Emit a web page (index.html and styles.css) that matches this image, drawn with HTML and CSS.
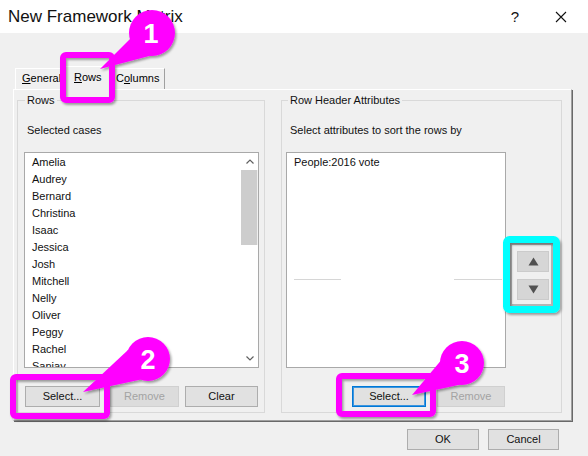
FILE: index.html
```html
<!DOCTYPE html>
<html lang="en">
<head>
<meta charset="utf-8">
<title>New Framework Matrix</title>
<link rel="stylesheet" href="styles.css">
</head>
<body>
<div class="dialog">
  <div class="titlebar">
    <span class="title">New Framework Matrix</span>
    <span class="tb-btn tb-help">?</span>
    <span class="tb-btn tb-close">
      <svg width="12" height="12" viewBox="0 0 12 12"><path d="M1 1L11 11M11 1L1 11" stroke="#111" stroke-width="1.1" fill="none"/></svg>
    </span>
  </div>

  <div class="tabs">
    <div class="tab tab-general"><u>G</u>eneral</div>
    <div class="tab tab-rows"><u>R</u>ows</div>
    <div class="tab tab-columns">C<u>o</u>lumns</div>
  </div>

  <div class="panel">
    <fieldset class="group group-rows">
      <legend>Rows</legend>
      <div class="group-body">
        <div class="caption">Selected cases</div>
        <div class="listbox listbox-rows">
          <ul class="items">
            <li>Amelia</li>
            <li>Audrey</li>
            <li>Bernard</li>
            <li>Christina</li>
            <li>Isaac</li>
            <li>Jessica</li>
            <li>Josh</li>
            <li>Mitchell</li>
            <li>Nelly</li>
            <li>Oliver</li>
            <li>Peggy</li>
            <li>Rachel</li>
            <li>Sanjay</li>
          </ul>
          <div class="scrollbar">
            <div class="sb-arrow"><svg width="8" height="5" viewBox="0 0 8 5"><path d="M0.5 4.5L4 1L7.5 4.5" stroke="#606060" stroke-width="1.2" fill="none"/></svg></div>
            <div class="sb-thumb"></div>
            <div class="sb-track"></div>
            <div class="sb-arrow"><svg width="8" height="5" viewBox="0 0 8 5"><path d="M0.5 0.5L4 4L7.5 0.5" stroke="#606060" stroke-width="1.2" fill="none"/></svg></div>
          </div>
        </div>
        <div class="btnrow">
          <button class="btn btn-select-l">Select...</button>
          <button class="btn btn-remove-l" disabled>Remove</button>
          <button class="btn btn-clear">Clear</button>
        </div>
      </div>
    </fieldset>

    <fieldset class="group group-attrs">
      <legend>Row Header Attributes</legend>
      <div class="group-body">
        <div class="caption">Select attributes to sort the rows by</div>
        <div class="attr-main">
          <div class="listbox listbox-attrs">
            <ul class="items"><li>People:2016 vote</li></ul>
          </div>
          <div class="movebtns">
            <button class="mbtn"><svg width="11" height="9" viewBox="0 0 11 9"><path d="M5.5 0.5L10.5 8.5H0.5Z" fill="#505050"/></svg></button>
            <button class="mbtn"><svg width="11" height="9" viewBox="0 0 11 9"><path d="M0.5 0.5H10.5L5.5 8.5Z" fill="#505050"/></svg></button>
          </div>
        </div>
        <div class="btnrow">
          <button class="btn btn-focus btn-select-r">Select...</button>
          <button class="btn btn-remove-r" disabled>Remove</button>
        </div>
      </div>
    </fieldset>
  </div>

  <div class="footer">
    <button class="btn btn-ok">OK</button>
    <button class="btn btn-cancel">Cancel</button>
  </div>

  <svg class="annotations" width="588" height="456" viewBox="0 0 588 456">
    <defs>
      <filter id="sh" x="-20%" y="-20%" width="140%" height="140%">
        <feDropShadow dx="1.5" dy="2" stdDeviation="1.2" flood-color="#000" flood-opacity="0.35"/>
      </filter>
    </defs>
    <line x1="294" y1="279.5" x2="341" y2="279.5" stroke="#d6d6d6" stroke-width="1"/>
    <line x1="454" y1="279.5" x2="502" y2="279.5" stroke="#d6d6d6" stroke-width="1"/>

    <rect x="511" y="244" width="41" height="61" fill="none" stroke="#b4b4b4" stroke-width="2"/>
    <rect x="506.5" y="239.5" width="50" height="70" rx="3" fill="none" stroke="#00ffff" stroke-width="7" filter="url(#sh)"/>

    <g fill="#ff00ff" filter="url(#sh)">
      <rect x="63" y="55" width="49" height="45" rx="3" fill="none" stroke="#ff00ff" stroke-width="6"/>
      <polygon points="100,69 132,37 153,55"/>
      <circle cx="152" cy="33" r="23"/>

      <rect x="13" y="377" width="94" height="39" rx="3" fill="none" stroke="#ff00ff" stroke-width="6"/>
      <polygon points="83,392 128,350 148,378"/>
      <circle cx="148" cy="359" r="22"/>

      <rect x="339" y="376" width="94" height="38" rx="3" fill="none" stroke="#ff00ff" stroke-width="6"/>
      <polygon points="412,395 443,358 463,384"/>
      <circle cx="462" cy="363" r="22"/>
    </g>
    <g class="num">
      <text x="151" y="43" text-anchor="middle">1</text>
      <text x="148" y="369" text-anchor="middle">2</text>
      <text x="462" y="373" text-anchor="middle">3</text>
    </g>
  </svg>
</div>
</body>
</html>
```

FILE: styles.css
```css
* { box-sizing: border-box; }

body {
  margin: 0;
  font-family: "Liberation Sans", Arial, sans-serif;
  font-size: 11px;
  color: #000;
  background: #f0f0f0;
}

.dialog {
  position: relative;
  width: 588px;
  height: 456px;
  background: #f0f0f0;
  overflow: hidden;
}

/* Title bar */
.titlebar {
  height: 33px;
  background: #fff;
  display: flex;
  align-items: center;
}
.title {
  flex: 1;
  margin-left: 8px;
  font-size: 17px;
  color: #111;
}
.tb-btn {
  width: 46px;
  height: 33px;
  display: flex;
  align-items: center;
  justify-content: center;
}
.tb-help { font-size: 15px; color: #111; }
.tb-close { margin-right: 4px; }

/* Tabs */
.tabs {
  display: flex;
  align-items: flex-end;
  height: 21px;
  margin-top: 35px;
  margin-left: 15px;
  position: relative;
  z-index: 1;
}
.tab {
  height: 21px;
  line-height: 19px;
  border-top: 1px solid #fff;
  border-left: 1px solid #fff;
  border-right: 1px solid #a0a0a0;
  background: #f0f0f0;
  white-space: nowrap;
  overflow: hidden;
}
.tab-general { width: 50px; padding-left: 6px; }
.tab-rows {
  width: 48px;
  height: 24px;
  margin: 0 0 -1px -2px;
  padding-left: 10px;
  line-height: 20px;
  position: relative;
  z-index: 2;
}
.tab-columns { width: 56px; margin-left: -2px; padding-left: 6px; }

/* Tab panel */
.panel {
  width: 559px;
  height: 332px;
  margin-left: 13px;
  border-top: 1px solid #fff;
  border-left: 1px solid #fff;
  border-right: 1px solid #a0a0a0;
  border-bottom: 1px solid #a0a0a0;
  box-shadow: 1px 1px 0 #696969;
  display: flex;
  align-items: flex-start;
  padding: 2px 0 0 3px;
}

.group {
  margin: 0;
  padding: 0;
  min-width: 0;
  height: 321px;
  border: 1px solid #d9d9d9;
}
.group legend {
  padding: 0 2px;
  margin-left: 7px;
  line-height: 16px;
  color: #111;
}
.group-rows { width: 248px; }
.group-rows .group-body { padding: 0 5px 0 6px; }
.group-attrs { width: 281px; margin-left: 16px; }
.group-attrs legend { margin-left: 6px; }
.group-attrs .group-body { padding: 0 5px 0 4px; }

.caption {
  margin-top: 14px;
  line-height: 16px;
  padding-left: 3px;
  color: #111;
}
.group-attrs .caption { padding-left: 4px; }

/* List boxes */
.listbox {
  margin-top: 14px;
  height: 216px;
  background: #fff;
  border: 1px solid #a9a9a9;
  display: flex;
  overflow: hidden;
}
.listbox-attrs { width: 220px; margin-top: 0; }
.items {
  list-style: none;
  margin: 0;
  padding: 1px 0 0 7px;
  flex: 1;
  line-height: 17px;
  color: #111;
  overflow: hidden;
}

.scrollbar {
  width: 17px;
  display: flex;
  flex-direction: column;
  background: #f0f0f0;
}
.sb-arrow {
  height: 17px;
  display: flex;
  align-items: center;
  justify-content: center;
  background: #fff;
}
.sb-thumb {
  height: 75px;
  margin: 0 1px 0 0;
  background: #cdcdcd;
}
.sb-track { flex: 1; background: #fff; }

.attr-main {
  margin-top: 14px;
  display: flex;
  align-items: flex-start;
}
.movebtns {
  margin-left: 11px;
  padding-top: 99px;
  display: flex;
  flex-direction: column;
  gap: 7px;
}
.mbtn {
  width: 32px;
  height: 21px;
  padding: 0;
  border: 1px solid #cbcbcb;
  background: #d6d6d6;
  display: flex;
  align-items: center;
  justify-content: center;
}

/* Buttons */
.btnrow {
  margin-top: 18px;
  display: flex;
}
.btn {
  height: 21px;
  padding: 0;
  font-family: inherit;
  font-size: 11px;
  color: #111;
  background: #e1e1e1;
  border: 1px solid #adadad;
  line-height: 19px;
  text-align: center;
}
.btn[disabled] {
  color: #a3a3a3;
  background: #dcdcdc;
  border-color: #d0d0d0;
}
.btn-focus {
  border-color: #0078d7;
  box-shadow: inset 0 0 0 1px #3d95de;
}
.btn-select-l { width: 75px; margin-left: 1px; }
.btn-remove-l { width: 69px; margin-left: 10px; }
.btn-clear { width: 73px; margin-left: 6px; }
.btn-select-r { width: 74px; margin-left: 66px; }
.btn-remove-r { width: 68px; margin-left: 11px; }

.footer {
  margin-top: 8px;
  display: flex;
  justify-content: flex-end;
  gap: 9px;
  padding-right: 29px;
}
.btn-ok { width: 72px; }
.btn-cancel { width: 71px; }

/* Annotation overlay */
.annotations {
  position: absolute;
  left: 0;
  top: 0;
  pointer-events: none;
  z-index: 5;
}
.num text {
  font-family: "Liberation Sans", Arial, sans-serif;
  font-weight: bold;
  font-size: 27px;
  fill: #fff;
}
```
